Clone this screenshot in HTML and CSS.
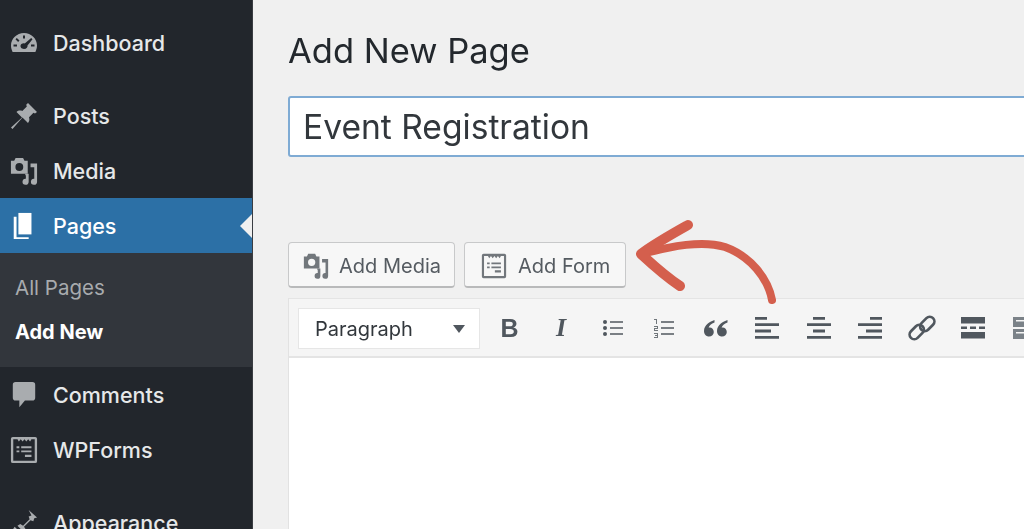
FILE: index.html
```html
<!DOCTYPE html>
<html lang="en">
<head>
<meta charset="utf-8">
<title>Add New Page</title>
<link rel="stylesheet" href="styles.css">
</head>
<body>
<div class="app">
  <nav class="sidebar">
    <a class="item first">
      <svg class="ico" viewBox="0 0 28 24"><path fill-rule="evenodd" d="M14 2C6.800 2 1 7.600 1 14.600c0 2.400.6 4.200 1.600 6.400h22.800c1-2.200 1.600-4 1.600-6.400C27 7.600 21.200 2 14 2zM13 4.500h2v3h-2zM6.800 7l2.700 2.500-1.400 1.400-2.600-2.600zM21.200 7l1.300 1.300-5 6.200c.3 1.600-.8 3.500-3.500 3.500s-4-2-3.300-3.900c.6-1.500 2.400-2.300 4-1.700zM3.500 13.500h3.500v2H3.500zM21 13.500h3.500v2H21z"/></svg>
      <span>Dashboard</span>
    </a>
    <a class="item gap">
      <svg class="ico" viewBox="0 0 28 28"><path d="M18 1l9 9-2 1.500-1.500-.8-4.500 4.500c.8 2.500.3 4.300-1 5.800l-5.500-5.500L2.500 27 1 25.500l11-10L6.500 10c1.500-1.300 3.500-1.800 5.800-1l4.500-4.500-.6-1.700z"/></svg>
      <span>Posts</span>
    </a>
    <a class="item">
      <svg class="ico" viewBox="0 0 30 30"><path fill-rule="evenodd" d="M6 1h8l1.500 3H19v14H1V4h3.500zM10 6.500a4.200 4.200 0 1 0 0 8.400 4.200 4.200 0 0 0 0-8.400z"/><path d="M22 6h7v19.500a3.300 3.300 0 1 1-3-3.300V10h-4zM16 17h4v8.500a3.300 3.300 0 1 1-3-3.300V19z" transform="translate(0 1)"/></svg>
      <span>Media</span>
    </a>
    <a class="item current">
      <svg class="ico pages" viewBox="0 0 28 30"><path d="M8 1h14v23H8z"/><path d="M3 5h3v22h13v2H3z"/></svg>
      <span>Pages</span>
    </a>
    <div class="submenu">
      <a class="sub">All Pages</a>
      <a class="sub on">Add New</a>
    </div>
    <a class="item">
      <svg class="ico" viewBox="0 0 28 30"><path d="M5 1h18c2 0 3 1 3 3v14c0 2-1 3-3 3h-8l-6 7v-7H5c-2 0-3-1-3-3V4c0-2 1-3 3-3z"/></svg>
      <span>Comments</span>
    </a>
    <a class="item">
      <svg class="ico" viewBox="0 0 30 30"><use href="#form"/></svg>
      <span>WPForms</span>
    </a>
    <a class="item gap">
      <svg class="ico" viewBox="0 0 30 30"><path d="M20 1l9 8-3 1-1 3-3-1-7 7 2 3-2 3-7-7 3-2 3 2 7-7-1-3 3-1zM5 19l6 6-4 4-6-4z"/></svg>
      <span>Appearance</span>
    </a>
  </nav>

  <main class="main">
    <h1 class="title">Add New Page</h1>
    <div class="title-box">Event Registration</div>

    <div class="buttons">
      <button class="btn">
        <svg class="btn-ico" viewBox="0 0 30 30"><path fill-rule="evenodd" d="M6 1h8l1.500 3H19v14H1V4h3.500zM10 6.500a4.200 4.200 0 1 0 0 8.400 4.200 4.200 0 0 0 0-8.400z"/><path d="M22 6h7v19.500a3.300 3.300 0 1 1-3-3.300V10h-4zM16 17h4v8.500a3.300 3.300 0 1 1-3-3.300V19z" transform="translate(0 1)"/></svg>
        <span>Add Media</span>
      </button>
      <button class="btn form">
        <svg class="btn-ico wide" viewBox="0 0 30 30"><use href="#form"/></svg>
        <span>Add Form</span>
      </button>
    </div>

    <div class="editor">
      <div class="toolbar">
        <div class="select"><span>Paragraph</span><i class="caret"></i></div>
        <span class="tool glyph bold">B</span>
        <span class="tool glyph italic">I</span>
        <svg class="tool" viewBox="0 0 24 24"><path d="M9 5h13v2H9zM9 11h13v2H9zM9 17h13v2H9z" opacity=".75"/><circle cx="4" cy="6" r="2"/><circle cx="4" cy="12" r="2"/><circle cx="4" cy="18" r="2"/></svg>
        <svg class="tool" viewBox="0 0 24 24"><path d="M9 5h13v2H9zM9 11h13v2H9zM9 17h13v2H9z" opacity=".75"/><path d="M2 3h3v5H4V4H2zM2 10h4v3H3v1h3v1H2v-3h3v-1H2zM2 17h4v5H2v-1h3v-1H3v-1h2v-1H2z" opacity=".8"/></svg>
        <svg class="tool" viewBox="0 0 24 24"><path d="M10.500 4C6 5.500 0 9 0 15c0 3.300 2.200 5.500 5 5.500s4.800-2 4.800-4.600c0-2.500-1.900-4.400-4.200-4.400-.5 0-.8.100-1 .2.500-2 2.700-3.800 5.900-5.200zM23.500 4C19 5.500 13 9 13 15c0 3.300 2.200 5.500 5 5.500s4.800-2 4.800-4.600c0-2.500-1.900-4.400-4.200-4.400-.5 0-.8.100-1 .2.500-2 2.700-3.800 5.900-5.200z"/></svg>
        <svg class="tool" viewBox="0 0 24 24"><path d="M0 1h12v2.800H0zM0 7.300h24v2.800H0zM0 13.600h16v2.800H0zM0 20h24v2.800H0z"/></svg>
        <svg class="tool" viewBox="0 0 24 24"><path d="M6 1h12v2.800H6zM0 7.300h24v2.800H0zM6 13.600h12v2.800H6zM0 20h24v2.800H0z"/></svg>
        <svg class="tool" viewBox="0 0 24 24"><path d="M12 1h12v2.800H12zM0 7.300h24v2.800H0zM8 13.600h16v2.800H8zM0 20h24v2.800H0z"/></svg>
        <svg class="tool link" viewBox="0 0 24 24"><g fill="none" stroke="#50575e" stroke-width="2.300"><rect x=".5" y="11.500" width="14" height="8" rx="4" transform="rotate(-45 7.500 15.500)"/><rect x="9.500" y="4.500" width="14" height="8" rx="4" transform="rotate(-45 16.500 8.500)"/></g></svg>
        <svg class="tool" viewBox="0 0 24 24"><path d="M0 1h24v6.500H0zM0 10.500h6v2.500H0zM9 10.500h6v2.500H9zM18 10.500h6v2.500h-6zM0 16h24v6.500H0z"/></svg>
        <svg class="tool last" viewBox="0 0 24 24"><path fill="#7b8288" fill-rule="evenodd" d="M0 1h24v10H0zM3 4v1.500h18V4zM0 13h24v10H0zM3 16v1.500h18V16z"/></svg>
      </div>
      <div class="content"></div>
    </div>

    <svg class="arrow" viewBox="0 0 150 90" aria-hidden="true">
      <path class="shaft" d="M140 84C136 62 118 40 93 31C70 24 40 30 10 38"/>
      <path class="head" d="M56 9C40 18 22 28 9 38C22 50 36 62 48 70"/>
    </svg>
  </main>
</div>

<svg class="defs" aria-hidden="true">
  <symbol id="form" viewBox="0 0 30 30">
    <path fill-rule="evenodd" d="M3 1h24a2 2 0 0 1 2 2v24a2 2 0 0 1-2 2H3a2 2 0 0 1-2-2V3a2 2 0 0 1 2-2zM3.500 3.500v23h23v-23h-3.500l-1.500 2.500-2-2.500-2 2.500-2-2.500-2 2.500-2-2.500-2 2.500-1.500-2.500z"/>
    <path d="M7 11h3v2H7zM12 11h11v2H12zM7 15.500h3v2H7zM12 15.500h11v2H12zM16 20h7v2.500h-7z"/>
  </symbol>
</svg>
</body>
</html>
```

FILE: styles.css
```css
* { box-sizing: border-box; }
html, body { margin: 0; height: 100%; overflow: hidden; }
body { font-family: "Inter", "Liberation Sans", sans-serif; background: #f0f0f0; }
.defs { display: none; }

.app { display: flex; height: 529px; overflow: hidden; filter: blur(.5px); }

.sidebar {
  flex: 0 0 253px;
  height: 529px;
  background: #22262c;
  border-right: 1px solid #3a3d42;
  padding-top: 15px;
  overflow: hidden;
  display: flex;
  flex-direction: column;
}
.item {
  flex: 0 0 55px;
  display: flex;
  align-items: center;
  gap: 15px;
  padding-left: 10px;
  color: #e6e8e9;
  font-size: 21.5px;
  font-weight: 500;
}
.item.gap { margin-top: 18px; }
.item.current { background: #2c70a6; color: #fff; position: relative; }
.item.current::after {
  content: "";
  position: absolute;
  right: -1px;
  top: 15px;
  border: 13px solid transparent;
  border-left: 0;
  border-right-color: #f0f0f0;
}
.ico { width: 28px; height: 28px; fill: #a9acaf; flex: none; }
.ico.pages { fill: #fff; }
.submenu {
  flex: 0 0 114px;
  background: #32363c;
  padding: 22px 0 0 15px;
  display: flex;
  flex-direction: column;
  gap: 20px;
}
.sub { color: #a8abae; font-size: 20.5px; line-height: 25px; }
.sub.on { color: #fff; font-weight: 700; font-size: 20px; }

.main { position: relative; flex: 1; min-width: 0; padding-left: 36px; }
.title {
  margin: 31px 0 0 -1px;
  font-size: 34.5px;
  font-weight: 400;
  line-height: 40px;
  color: #23282d;
}
.title-box {
  margin: 25px -4px 0 -1px;
  height: 61px;
  padding-left: 13px;
  background: #fff;
  border: 2px solid #7fabd4;
  border-radius: 3px;
  font-size: 33.6px;
  line-height: 57px;
  color: #32373c;
}
.buttons { display: flex; gap: 9px; margin: 85px 0 0 -1px; }
.btn {
  height: 46px;
  width: 167px;
  padding: 2px 0 0 13px;
  display: flex;
  align-items: center;
  gap: 9px;
  background: #f7f7f7;
  border: 1px solid #c8c9ca;
  border-bottom: 2px solid #b9babb;
  border-radius: 4px;
  color: #555b61;
  font-family: inherit;
  font-size: 20px;
}
.btn.form { width: 162px; padding-left: 16px; gap: 11px; }
.btn-ico { width: 28px; height: 26px; fill: #72777c; flex: none; }
.btn-ico.wide { width: 26px; }

.editor { margin: 10px -4px 0 -1px; border-left: 1px solid #e2e2e2; }
.toolbar {
  height: 60px;
  padding: 9px 0 0 9px;
  display: flex;
  align-items: flex-start;
  background: #f5f5f5;
  border-top: 1px solid #e4e4e4;
  border-bottom: 2px solid #e4e4e4;
  overflow: hidden;
}
.select {
  flex: none;
  width: 182px;
  height: 41px;
  margin-right: 17.5px;
  padding: 0 14px 0 16px;
  display: flex;
  align-items: center;
  justify-content: space-between;
  background: #fff;
  border: 1px solid #e6e6e6;
  font-size: 20px;
  color: #32373c;
}
.caret { border: 6px solid transparent; border-top: 8px solid #50575e; border-bottom: 0; }
.tool { flex: none; width: 24px; height: 24px; margin: 8px 27.5px 0 0; fill: #50575e; }
.tool.link { width: 28px; height: 28px; margin: 6px 25.5px 0 -2px; }
.tool.last { margin-right: 0; }
.glyph { display: flex; align-items: center; justify-content: center; color: #50575e; line-height: 24px; }
.bold { font: 700 25px/24px "Liberation Sans", sans-serif; }
.italic { font: italic 700 26px/24px "Liberation Serif", serif; }
.content { height: 200px; background: #fff; }

.arrow { position: absolute; left: 379px; top: 216px; width: 150px; height: 90px; }
.shaft, .head { fill: none; stroke: #d45f4d; stroke-linecap: round; stroke-linejoin: round; }
.shaft { stroke-width: 8; }
.head { stroke-width: 10; }
```
